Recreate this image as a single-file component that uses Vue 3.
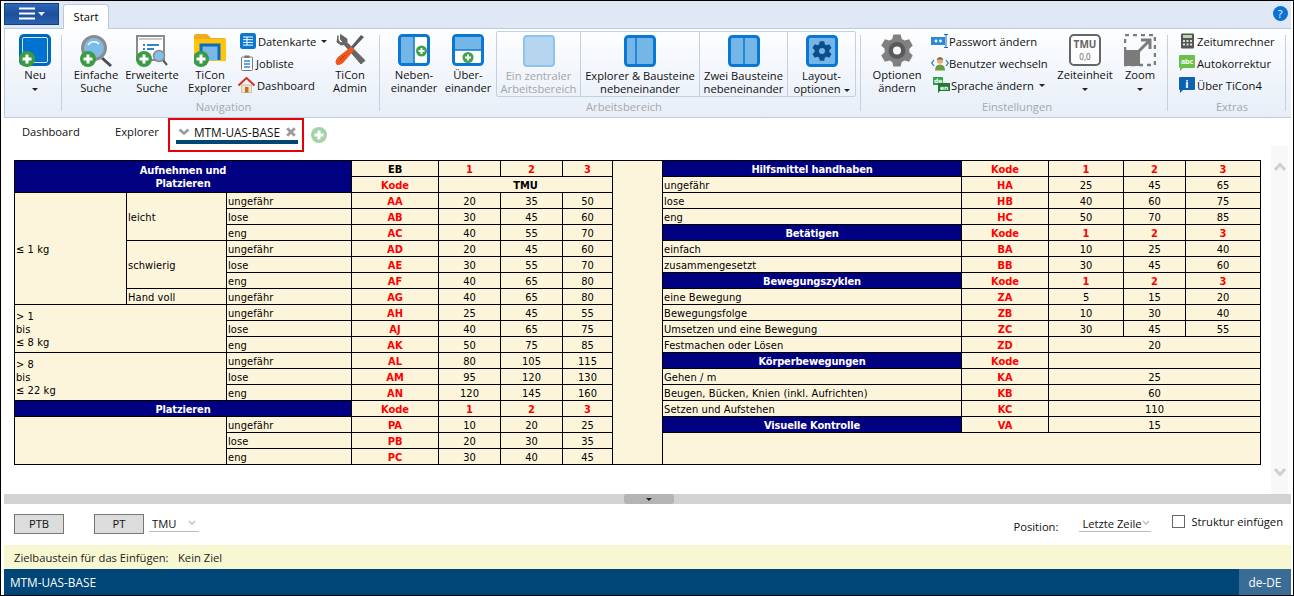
<script setup>
const c = (t, k = 'n', cs = 1, rs = 1) => ({ t, k, cs, rs })
const vals = (...a) => a.map(v => c(String(v)))
const row = (label, code, ...v) => [c(label, 'l'), c(code, 'k'), ...vals(...v)]
const rHead = (t, ...rest) => [c(t, 'h'), ...rest.map(x => c(x, 'k'))]
const rWide = (label, code, v) => [c(label, 'l'), c(code, 'k'), c(v, 'n', 3)]

const left = [
  [c('Aufnehmen und\nPlatzieren', 'h', 3, 2), c('EB', 'b'), c('1', 'k'), c('2', 'k'), c('3', 'k')],
  [c('Kode', 'k'), c('TMU', 'b', 3)],
  [c('≤ 1 kg', 'l', 1, 7), c('leicht', 'l', 1, 3), ...row('ungefähr', 'AA', 20, 35, 50)],
  row('lose', 'AB', 30, 45, 60),
  row('eng', 'AC', 40, 55, 70),
  [c('schwierig', 'l', 1, 3), ...row('ungefähr', 'AD', 20, 45, 60)],
  row('lose', 'AE', 30, 55, 70),
  row('eng', 'AF', 40, 65, 80),
  [c('Hand voll', 'l'), ...row('ungefähr', 'AG', 40, 65, 80)],
  [c('> 1\nbis\n≤ 8 kg', 'l', 2, 3), ...row('ungefähr', 'AH', 25, 45, 55)],
  row('lose', 'AJ', 40, 65, 75),
  row('eng', 'AK', 50, 75, 85),
  [c('> 8\nbis\n≤ 22 kg', 'l', 2, 3), ...row('ungefähr', 'AL', 80, 105, 115)],
  row('lose', 'AM', 95, 120, 130),
  row('eng', 'AN', 120, 145, 160),
  [c('Platzieren', 'h', 3), c('Kode', 'k'), c('1', 'k'), c('2', 'k'), c('3', 'k')],
  [c('', 'l', 2, 3), ...row('ungefähr', 'PA', 10, 20, 25)],
  row('lose', 'PB', 20, 30, 35),
  row('eng', 'PC', 30, 40, 45),
]
const right = [
  rHead('Hilfsmittel handhaben', 'Kode', '1', '2', '3'),
  row('ungefähr', 'HA', 25, 45, 65),
  row('lose', 'HB', 40, 60, 75),
  row('eng', 'HC', 50, 70, 85),
  rHead('Betätigen', 'Kode', '1', '2', '3'),
  row('einfach', 'BA', 10, 25, 40),
  row('zusammengesetzt', 'BB', 30, 45, 60),
  rHead('Bewegungszyklen', 'Kode', '1', '2', '3'),
  row('eine Bewegung', 'ZA', 5, 15, 20),
  row('Bewegungsfolge', 'ZB', 10, 30, 40),
  row('Umsetzen und eine Bewegung', 'ZC', 30, 45, 55),
  rWide('Festmachen oder Lösen', 'ZD', '20'),
  [c('Körperbewegungen', 'h'), c('Kode', 'k'), c('', 'n', 3)],
  rWide('Gehen / m', 'KA', '25'),
  rWide('Beugen, Bücken, Knien (inkl. Aufrichten)', 'KB', '60'),
  rWide('Setzen und Aufstehen', 'KC', '110'),
  [c('Visuelle Kontrolle', 'h'), c('VA', 'k'), c('15', 'n', 3)],
  [c('', 'l', 5, 2)],
  [],
]
const rows = left.map((l, i) => ({ l, r: right[i], gap: i === 0 }))
const colWidths = [112, 100, 125, 87, 62, 62, 50, 50, 299, 87, 75, 62, 75]

function gear(ro, ri, teeth) {
  const pts = []
  const step = (Math.PI * 2) / teeth
  for (let i = 0; i < teeth; i++) {
    const a = -Math.PI / 2 + i * step
    const list = [[ri, -0.3], [ro, -0.17], [ro, 0.17], [ri, 0.3]]
    for (const [r, f] of list) {
      const t = a + f * step * 1.25
      pts.push((r * Math.cos(t)).toFixed(2) + ' ' + (r * Math.sin(t)).toFixed(2))
    }
  }
  return 'M' + pts.join('L') + 'Z'
}
const gearBig = gear(16.5, 12.5, 6)
const gearSmall = gear(10, 7.4, 6)
</script>

<template>
  <div class="app">
    <svg class="defs" width="0" height="0">
      <defs>
        <g id="plus">
          <circle cx="0" cy="0" r="8" fill="#3b9a44" />
          <path d="M-4.5 0H4.5M0-4.5V4.5" stroke="#fff" stroke-width="3" />
        </g>
        <g id="plusS">
          <circle cx="0" cy="0" r="5.5" fill="#3fa14a" />
          <path d="M-3 0H3M0-3V3" stroke="#fff" stroke-width="2" />
        </g>
      </defs>
    </svg>

    <div class="titlebar">
      <div class="appmenu">
        <svg width="28" height="14" viewBox="0 0 28 14">
          <path d="M1 1.5H17M1 6.5H17M1 11.5H17" stroke="#fff" stroke-width="2" />
          <path d="M20 5H27L23.5 9Z" fill="#dfe8f4" />
        </svg>
      </div>
      <div class="starttab">Start</div>
      <div class="helpicon">?</div>
    </div>

    <div class="ribbon">
      <div class="group g-neu">
        <div class="gbody">
          <div class="bigbtn w52">
            <svg class="ic" width="32" height="34" viewBox="0 0 32 34">
              <rect x="0" y="0" width="32" height="32" rx="5" fill="#0069b9" />
              <rect x="3.5" y="3.5" width="25" height="25" rx="1.5" fill="#0072cf" stroke="#cfe4f6" />
              <use href="#plus" x="8" y="25" />
            </svg>
            <span class="lbl">Neu<br /><i class="caret"></i></span>
          </div>
        </div>
      </div>
      <div class="sep"></div>

      <div class="group g-nav">
        <div class="gbody">
          <div class="bigbtn w56">
            <svg class="ic" width="32" height="34" viewBox="0 0 32 34">
              <path d="M22 24L31 32" stroke="#4a4a4a" stroke-width="3" />
              <circle cx="14" cy="14" r="11.5" fill="#7dbce8" stroke="#8c8c8c" stroke-width="3" />
              <path d="M8 11A7 7 0 0 1 19 10" fill="none" stroke="#fff" stroke-width="1.5" />
              <use href="#plus" x="8" y="25" />
            </svg>
            <span class="lbl">Einfache<br />Suche</span>
          </div>
          <div class="bigbtn w56">
            <svg class="ic" width="32" height="34" viewBox="0 0 32 34">
              <rect x="1" y="2" width="27" height="24" fill="#fff" stroke="#8a8a8a" stroke-width="2" />
              <path d="M3 4H26V6H3Z" fill="#c9c9c9" />
              <path d="M7 11H9M11 11H23M7 15H9M11 15H18" stroke="#2f86d0" stroke-width="2" />
              <path d="M26 25L31 31" stroke="#555" stroke-width="2" />
              <circle cx="23" cy="22" r="5.5" fill="#84bfe8" stroke="#8c8c8c" stroke-width="1.5" />
              <use href="#plus" x="8" y="25" />
            </svg>
            <span class="lbl">Erweiterte<br />Suche</span>
          </div>
          <div class="bigbtn w60">
            <svg class="ic" width="32" height="34" viewBox="0 0 32 34">
              <path d="M0 2Q0 0 2 0H13L17 4H30Q32 4 32 6V10H0Z" fill="#f5a623" />
              <rect x="0" y="5" width="32" height="22" fill="#ffc50a" />
              <path d="M7 27V11H25V26" fill="#79b8e6" stroke="#0a6ebd" stroke-width="3" />
              <use href="#plus" x="7" y="25" />
            </svg>
            <span class="lbl">TiCon<br />Explorer</span>
          </div>
          <div class="smallcol w86">
            <div class="small">
              <svg width="16" height="16" viewBox="0 0 16 16">
                <rect width="16" height="16" rx="2.5" fill="#0a78cf" />
                <path d="M3 4H13M3 6.7H13M3 9.4H13M3 12.1H13M7 4V12" stroke="#fff" />
              </svg>
              <span>Datenkarte</span><i class="caret ml3"></i>
            </div>
            <div class="small">
              <svg width="14" height="16" viewBox="0 0 14 16">
                <rect x="1.5" y="2" width="11" height="13.5" rx="1" fill="#fff" stroke="#777" />
                <rect x="4.5" y="0.5" width="5" height="2.5" fill="#777" />
                <path d="M4 6H10M4 9H10M4 12H10" stroke="#2f86d0" stroke-width="1.5" />
              </svg>
              <span>Jobliste</span>
            </div>
            <div class="small mlm2">
              <svg width="17" height="16" viewBox="0 0 16 16">
                <path d="M3 8V15.5H13V8Z" fill="#f6e6c4" stroke="#b9a27a" stroke-width=".6" />
                <rect x="6.5" y="10" width="3.5" height="5.5" fill="#b8742c" />
                <path d="M0 8.5L8 1L16 8.5" fill="none" stroke="#d2332b" stroke-width="2" />
              </svg>
              <span>Dashboard</span>
            </div>
          </div>
          <div class="bigbtn w48">
            <svg class="ic" width="32" height="34" viewBox="0 0 32 34">
              <path d="M4 1.5L3 8L7 11L10 10.5L27 30L31 26.5L13 8.5V5L6.5 0.5L6.5 5.5L9 8L6 9L4 5Z" fill="#666" stroke="#666" />
              <path d="M30 3L27 1L16 14L18 16Z" fill="#5b5b5b" />
              <path d="M17.5 12.5L20.5 15.5L10 28Q6 32.5 2.5 30.5Q0 27.5 4 23Z" fill="#f0561d" />
              <path d="M6 26L11 21" stroke="#a83a10" stroke-width="1" />
            </svg>
            <span class="lbl">TiCon<br />Admin</span>
          </div>
        </div>
        <div class="glabel">Navigation</div>
      </div>
      <div class="sep"></div>

      <div class="group g-arb">
        <div class="gbody">
          <div class="bigbtn w52">
            <svg class="ic" width="32" height="34" viewBox="0 0 32 34">
              <rect x="1.5" y="1.5" width="29" height="29" rx="3" fill="#fff" stroke="#0a78d2" stroke-width="3" />
              <path d="M3 3H16V29H3Z" fill="#74b6e6" />
              <path d="M16 3V29" stroke="#0a78d2" stroke-width="1.5" />
              <use href="#plusS" x="23.5" y="17" />
            </svg>
            <span class="lbl">Neben-<br />einander</span>
          </div>
          <div class="bigbtn w52 ml2">
            <svg class="ic" width="32" height="34" viewBox="0 0 32 34">
              <rect x="1.5" y="1.5" width="29" height="29" rx="3" fill="#fff" stroke="#0a78d2" stroke-width="3" />
              <path d="M3 3H29V16H3Z" fill="#74b6e6" />
              <path d="M3 16H29" stroke="#0a78d2" stroke-width="1.5" />
              <use href="#plusS" x="16" y="23.5" />
            </svg>
            <span class="lbl">Über-<br />einander</span>
          </div>
          <div class="segbox">
            <div class="seg w84 off">
              <svg width="32" height="32" viewBox="0 0 32 32">
                <rect x="1" y="1" width="30" height="30" rx="3" fill="#b6d6ef" stroke="#8fc3ee" stroke-width="2" />
              </svg>
              <span class="lbl">Ein zentraler<br />Arbeitsbereich</span>
            </div>
            <div class="seg w119">
              <svg width="32" height="32" viewBox="0 0 32 32">
                <rect x="1.5" y="1.5" width="29" height="29" rx="3" fill="#74b6e6" stroke="#0a78d2" stroke-width="3" />
                <path d="M12 3V29" stroke="#0a78d2" stroke-width="1.5" />
              </svg>
              <span class="lbl">Explorer &amp; Bausteine<br />nebeneinander</span>
            </div>
            <div class="seg w88">
              <svg width="32" height="32" viewBox="0 0 32 32">
                <rect x="1.5" y="1.5" width="29" height="29" rx="3" fill="#74b6e6" stroke="#0a78d2" stroke-width="3" />
                <path d="M16 3V29" stroke="#0a78d2" stroke-width="1.5" />
              </svg>
              <span class="lbl">Zwei Bausteine<br />nebeneinander</span>
            </div>
            <div class="seg w67">
              <svg width="32" height="32" viewBox="0 0 32 32">
                <rect x="1.5" y="1.5" width="29" height="29" rx="3" fill="#74b6e6" stroke="#0a78d2" stroke-width="3" />
                <g transform="translate(16 16)">
                  <path :d="gearSmall" fill="#0b4e8e" />
                  <circle r="3" fill="#74b6e6" />
                </g>
              </svg>
              <span class="lbl">Layout-<br />optionen<i class="caret ml3"></i></span>
            </div>
          </div>
        </div>
        <div class="glabel">Arbeitsbereich</div>
      </div>
      <div class="sep"></div>

      <div class="group g-ein">
        <div class="gbody">
          <div class="bigbtn w60">
            <svg class="ic" width="34" height="34" viewBox="0 0 34 34">
              <g transform="translate(17 16.5)">
                <path :d="gearBig" fill="#808080" />
                <circle r="8.5" fill="#5a5a5a" />
                <circle r="4" fill="#f4f7fb" />
              </g>
            </svg>
            <span class="lbl">Optionen<br />ändern</span>
          </div>
          <div class="smallcol w128 tight">
            <div class="small">
              <svg width="18" height="16" viewBox="0 0 18 16">
                <rect x="0" y="4" width="14" height="8" fill="#2a8ad8" />
                <circle cx="5" cy="8" r="1.4" fill="#fff" /><circle cx="9.5" cy="8" r="1.4" fill="#fff" />
                <path d="M13 1.5H17M13 14.5H17M15 1.5V14.5" stroke="#1470bd" />
              </svg>
              <span>Passwort ändern</span>
            </div>
            <div class="small">
              <svg width="18" height="16" viewBox="0 0 18 16">
                <path d="M3 5L0.7 8L3 11M15 5L17.3 8L15 11" fill="none" stroke="#1b6fb8" stroke-width="1.2" />
                <circle cx="9" cy="5.5" r="3.2" fill="#e0b080" />
                <path d="M5.5 4.5Q9 0 12.5 4.5Z" fill="#7b6a4a" />
                <path d="M4 15.5Q4 9.5 9 9.5Q14 9.5 14 15.5Z" fill="#6f9a3b" />
              </svg>
              <span>Benutzer wechseln</span>
            </div>
            <div class="small sprache">
              <svg width="17" height="17" viewBox="0 0 17 17">
                <path d="M0 1Q0 0 1 0H9Q10 0 10 1V8H0Z" fill="#2fa04a" />
                <path d="M5 6H17V14H7L5 16Z" fill="#1e7a36" />
                <text x="1" y="6" class="svgt">de</text>
                <text x="7" y="12.5" class="svgt">en</text>
              </svg>
              <span class="ml1">Sprache ändern</span><i class="caret ml5"></i>
            </div>
          </div>
          <div class="bigbtn w60">
            <svg class="ic" width="32" height="34" viewBox="0 0 32 34">
              <rect x="1" y="1" width="30" height="30" rx="4" fill="#fdfdfd" stroke="#666" stroke-width="2" />
              <text x="16" y="14" class="svgtmu">TMU</text>
              <text x="16" y="26" class="svgzero">0,0</text>
            </svg>
            <span class="lbl">Zeiteinheit<br /><i class="caret"></i></span>
          </div>
          <div class="bigbtn w50">
            <svg class="ic" width="32" height="34" viewBox="0 0 32 34">
              <rect x="1" y="1" width="30" height="30" fill="none" stroke="#7b7b7b" stroke-width="2.5" stroke-dasharray="4 4" />
              <rect x="0" y="16" width="16" height="16" fill="#7b7b7b" />
              <path d="M14 18L26 6M17 6H26V15" fill="none" stroke="#7b7b7b" stroke-width="3" />
            </svg>
            <span class="lbl">Zoom<br /><i class="caret"></i></span>
          </div>
        </div>
        <div class="glabel">Einstellungen</div>
      </div>
      <div class="sep"></div>

      <div class="group g-ext">
        <div class="gbody">
          <div class="smallcol">
            <div class="small">
              <svg width="16" height="16" viewBox="0 0 16 16">
                <rect x="2" y="0.5" width="13" height="15" rx="1" fill="#555" />
                <rect x="4" y="2" width="9" height="3" fill="#b8dba8" />
                <path d="M4 7H6V9H4ZM7.5 7H9.5V9H7.5ZM11 7H13V9H11ZM4 10.5H6V12.5H4ZM7.5 10.5H9.5V12.5H7.5ZM11 10.5H13V12.5H11Z" fill="#ddd" />
              </svg>
              <span>Zeitumrechner</span>
            </div>
            <div class="small">
              <svg width="16" height="17" viewBox="0 0 16 17">
                <path d="M1 0H15Q16 0 16 1V12Q16 13 15 13H4L1 16V13H1Q0 13 0 12V1Q0 0 1 0Z" fill="#6cc04a" />
                <text x="8" y="9" class="svgabc">abc</text>
              </svg>
              <span>Autokorrektur</span>
            </div>
            <div class="small">
              <svg width="16" height="17" viewBox="0 0 16 17">
                <path d="M1 0H15Q16 0 16 1V12Q16 13 15 13H4L1 16V13H1Q0 13 0 12V1Q0 0 1 0Z" fill="#0a62b0" />
                <text x="8" y="10.5" class="svgi">i</text>
              </svg>
              <span>Über TiCon4</span>
            </div>
          </div>
        </div>
        <div class="glabel">Extras</div>
      </div>
      <div class="sep"></div>
    </div>

    <div class="tabs">
      <div class="tab t-dash">Dashboard</div>
      <div class="tab t-exp">Explorer</div>
      <div class="acttab">
        <div class="actrow">
          <svg width="12" height="8" viewBox="0 0 12 8"><path d="M1.5 1.5L6 5.5L10.5 1.5" fill="none" stroke="#9a9a9a" stroke-width="2.6" /></svg>
          <span>MTM-UAS-BASE</span>
          <svg width="10" height="10" viewBox="0 0 10 10"><path d="M1.2 1.2L8.8 8.8M8.8 1.2L1.2 8.8" stroke="#9a9a9a" stroke-width="2.8" /></svg>
        </div>
        <div class="actline"></div>
      </div>
      <svg class="addtab" width="16" height="16" viewBox="-8 -8 16 16">
        <circle r="8" fill="#a3d3a6" />
        <path d="M-4.5 0H4.5M0-4.5V4.5" stroke="#fff" stroke-width="3" />
      </svg>
    </div>

    <div class="main">
      <table class="uas">
        <colgroup><col v-for="(w, i) in colWidths" :key="i" :style="{ width: w + 'px' }" /></colgroup>
        <tbody>
          <tr v-for="(r, i) in rows" :key="i">
            <td v-for="(x, j) in r.l" :key="'l' + j" :class="x.k" :colspan="x.cs" :rowspan="x.rs">{{ x.t }}</td>
            <td v-if="r.gap" rowspan="19"></td>
            <td v-for="(x, j) in r.r" :key="'r' + j" :class="x.k" :colspan="x.cs" :rowspan="x.rs">{{ x.t }}</td>
          </tr>
        </tbody>
      </table>
      <div class="scroll">
        <svg width="12" height="9" viewBox="0 0 12 9"><path d="M1 8L6 2.5L11 8" fill="none" stroke="#cfcfcf" stroke-width="3" /></svg>
        <svg width="12" height="9" viewBox="0 0 12 9"><path d="M1 1L6 6.5L11 1" fill="none" stroke="#cfcfcf" stroke-width="3" /></svg>
      </div>
    </div>

    <div class="splitter">
      <div class="grip"><i></i></div>
    </div>

    <div class="controls">
      <div class="pbtn">PTB</div>
      <div class="pbtn pt">PT</div>
      <div class="sel s-tmu">
        <span>TMU</span>
        <svg width="8" height="6" viewBox="0 0 8 6"><path d="M1 1L4 4L7 1" fill="none" stroke="#c4c4c4" stroke-width="1.6" /></svg>
      </div>
      <div class="pos">Position:</div>
      <div class="sel s-pos">
        <span>Letzte Zeile</span>
        <svg width="8" height="6" viewBox="0 0 8 6"><path d="M1 1L4 4L7 1" fill="none" stroke="#c4c4c4" stroke-width="1.6" /></svg>
      </div>
      <div class="chk"><i></i><span>Struktur einfügen</span></div>
    </div>

    <div class="target"><span class="t1">Zielbaustein für das Einfügen:</span><span>Kein Ziel</span></div>

    <div class="status"><span>MTM-UAS-BASE</span><div class="lang">de-DE</div></div>
  </div>
</template>

<style>
html, body { margin: 0; background: #fff; overflow: hidden; }
</style>

<style scoped>
.app {
  width: 1294px; height: 596px; box-sizing: border-box;
  border: 1px solid #000;
  padding: 0 2px 0 3px;
  background: #fff;
  display: flex; flex-direction: column;
  font-family: "Open Sans", "Noto Sans", sans-serif;
  font-size: 11.2px; color: #111;
  overflow: hidden;
}
.defs { position: absolute; }

.titlebar {
  height: 27px; flex: none; background: #dfe8f4;
  display: flex; align-items: flex-start; position: relative;
}
.appmenu {
  width: 55px; height: 22px; margin-top: 2px; box-sizing: border-box;
  background: linear-gradient(#2d67b4, #1d4f9c 50%, #2c62ad);
  border: 1px solid #12407f;
  display: flex; align-items: center; justify-content: center;
}
.starttab {
  margin-left: 4px; margin-top: 3px; width: 46px; height: 25px; box-sizing: border-box;
  background: #fff; border: 1px solid #b9cadd; border-bottom: none;
  border-radius: 3px 3px 0 0;
  text-align: center; line-height: 24px; color: #000;
  position: relative; z-index: 2;
}
.helpicon {
  margin-left: auto; margin-right: 3.5px; margin-top: 5px;
  width: 15px; height: 15px; border-radius: 50%;
  background: #0a72d4; color: #fff; text-align: center;
  font-size: 11px; line-height: 15px;
}

.ribbon {
  height: 90px; flex: none; box-sizing: border-box;
  border: 1px solid #bccbdd; border-right: none;
  background: linear-gradient(#fdfeff, #e7eef8);
  display: flex;
}
.group { display: flex; flex-direction: column; flex: none; }
.gbody { height: 74px; display: flex; align-items: flex-start; }
.glabel { text-align: center; color: #a8a8a8; line-height: 14px; margin-top: -3px; }
.g-neu { width: 56px; padding-left: 4px; box-sizing: border-box; }
.g-nav { width: 317px; padding-left: 6px; box-sizing: border-box; }
.g-arb { width: 480px; padding-left: 8px; box-sizing: border-box; }
.g-ein { width: 306px; padding-left: 6px; box-sizing: border-box; }
.g-ext { width: 117px; padding-left: 11px; box-sizing: border-box; }
.sep { width: 1px; flex: none; margin: 6px 0 6px; background: #c4d0de; }

.bigbtn { display: flex; flex-direction: column; align-items: center; padding-top: 5px; flex: none; }
.ic { display: block; }
.lbl { display: block; text-align: center; line-height: 13px; margin-top: 0; white-space: nowrap; color: #111; }
.w48 { width: 48px; } .w50 { width: 50px; } .w52 { width: 52px; } .w56 { width: 56px; }
.w60 { width: 60px; } .w86 { width: 86px; } .w128 { width: 128px; }
.ml1 { margin-left: 1px; } .ml2 { margin-left: 2px; }
.caret {
  display: inline-block; width: 0; height: 0; vertical-align: middle;
  border: 3px solid transparent; border-top: 3px solid #222; border-bottom: none;
}
.ml3 { margin-left: 3px; } .ml5 { margin-left: 5px; }

.smallcol { display: flex; flex-direction: column; padding-top: 1px; flex: none; box-sizing: border-box; }
.small { height: 22px; display: flex; align-items: center; gap: 2px; white-space: nowrap; }
.small svg { flex: none; }
.mlm2 { margin-left: -2px; }
.tight { padding-left: 4px; }
.tight .small { gap: 0; }
.sprache { padding-left: 2px; }

.segbox {
  margin: 2px 0 0 2px; height: 66px; box-sizing: border-box;
  border: 1px solid #c3d0df; border-radius: 2px; display: flex; flex: none;
}
.seg {
  display: flex; flex-direction: column; align-items: center; padding-top: 3px;
  box-sizing: border-box; border-right: 1px solid #c3d0df; flex: none;
}
.seg:last-child { border-right: none; }
.seg svg { display: block; }
.seg .lbl { margin-top: 2px; }
.w84 { width: 84px; } .w119 { width: 119px; } .w88 { width: 88px; } .w67 { width: 67px; }
.off .lbl { color: #a5a5a5; }

.svgt { font: bold 6px "DejaVu Sans", sans-serif; fill: #fff; }
.svgtmu { font: bold 10px "Noto Sans", sans-serif; fill: #666; text-anchor: middle; }
.svgzero { font: 8px "Noto Sans", sans-serif; fill: #666; text-anchor: middle; }
.svgabc { font: bold 7px "Noto Sans", sans-serif; fill: #fff; text-anchor: middle; }
.svgi { font: bold 11px "Noto Sans", sans-serif; fill: #fff; text-anchor: middle; }

.tabs { height: 28px; flex: none; display: flex; align-items: flex-start; position: relative; z-index: 3; }
.tab { line-height: 28px; white-space: nowrap; }
.t-dash { margin-left: 18px; width: 93px; }
.t-exp { width: 53px; }
.acttab {
  width: 136px; height: 34px; box-sizing: border-box; border: 2px solid #e8000d; flex: none;
  padding: 0 4px 0 6px;
}
.actrow {
  display: flex; align-items: center; height: 20px; box-sizing: border-box; padding: 3px 0 0 2px;
  gap: 4px; white-space: nowrap; color: #111;
}
.actrow span { width: 88px; margin-left: 0; font-size: 11.8px; }
.actline { height: 4px; background: #004676; margin-top: 0; }
.addtab { margin: 9px 0 0 7px; flex: none; }

.main {
  height: 348px; flex: none; box-sizing: border-box;
  padding: 14px 3px 0 10px;
  display: flex; justify-content: space-between; align-items: flex-start;
}
.uas {
  border-collapse: collapse; table-layout: fixed; width: 1247px; flex: none;
  font-family: "DejaVu Sans Condensed", "DejaVu Sans", sans-serif;
  font-stretch: condensed;
  font-size: 11px; line-height: 13px; color: #000;
}
.uas td {
  border: 1px solid #000; background: #fcf5dc; padding: 1px 1px 0; height: 14px;
  white-space: pre-line; overflow: hidden; text-align: center;
}
.uas td.l { text-align: left; letter-spacing: .08px; }
.uas td.h { background: #000080; color: #fff; font-weight: bold; letter-spacing: -.15px; }
.uas td.k { color: #ff0000; font-weight: bold; }
.uas td.b { font-weight: bold; }
.scroll {
  width: 17px; height: 348px; margin-top: -14px; box-sizing: border-box;
  padding: 16px 0 17px; background: #f8f8f8; flex: none;
  display: flex; flex-direction: column; align-items: center; justify-content: space-between;
}

.splitter { height: 10px; flex: none; background: #d2d2d2; position: relative; }
.grip {
  width: 50px; height: 10px; margin-left: 620px; background: #b4b4b4; border-radius: 3px;
  display: flex; align-items: center; justify-content: center;
}
.grip i { width: 0; height: 0; border: 3px solid transparent; border-top: 3px solid #222; border-bottom: none; }

.controls {
  height: 41px; flex: none; display: flex; align-items: flex-start; padding: 10px 8px 0 10px; box-sizing: border-box;
}
.pbtn {
  width: 50px; height: 20px; box-sizing: border-box; background: #dcdcdc; border: 1px solid #777;
  text-align: center; line-height: 18px; color: #111; flex: none;
}
.pt { margin-left: 30px; }
.sel {
  height: 19px; box-sizing: border-box; border-bottom: 1px solid #bbb; display: flex; align-items: center;
  justify-content: space-between; flex: none; margin-top: -1px; padding-top: 2px; white-space: nowrap;
}
.sel svg { flex: none; margin-right: 1px; }
.s-tmu { width: 50px; margin-left: 5px; padding-left: 3px; padding-right: 2px; }
.s-pos { width: 72px; margin-left: 21px; padding-left: 3px; }
.pos { margin-left: auto; line-height: 16px; margin-top: 5px; }
.chk { margin-left: 21px; display: flex; align-items: center; gap: 6px; margin-top: -1px; white-space: nowrap; height: 16px; }
.chk i { width: 13px; height: 13px; border: 1px solid #666; box-sizing: border-box; background: #fff; flex: none; }

.target {
  height: 24px; flex: none; background: #f7f8d2; display: flex; align-items: center; padding-left: 10px; color: #222;
}
.t1 { width: 164px; }
.status {
  height: 26px; flex: none; background: #004676; color: #fff; display: flex; align-items: center;
  justify-content: space-between; padding-left: 6px; font-size: 11.8px;
}
.lang { width: 52px; height: 26px; background: #3a6d96; text-align: center; line-height: 26px; }
</style>
